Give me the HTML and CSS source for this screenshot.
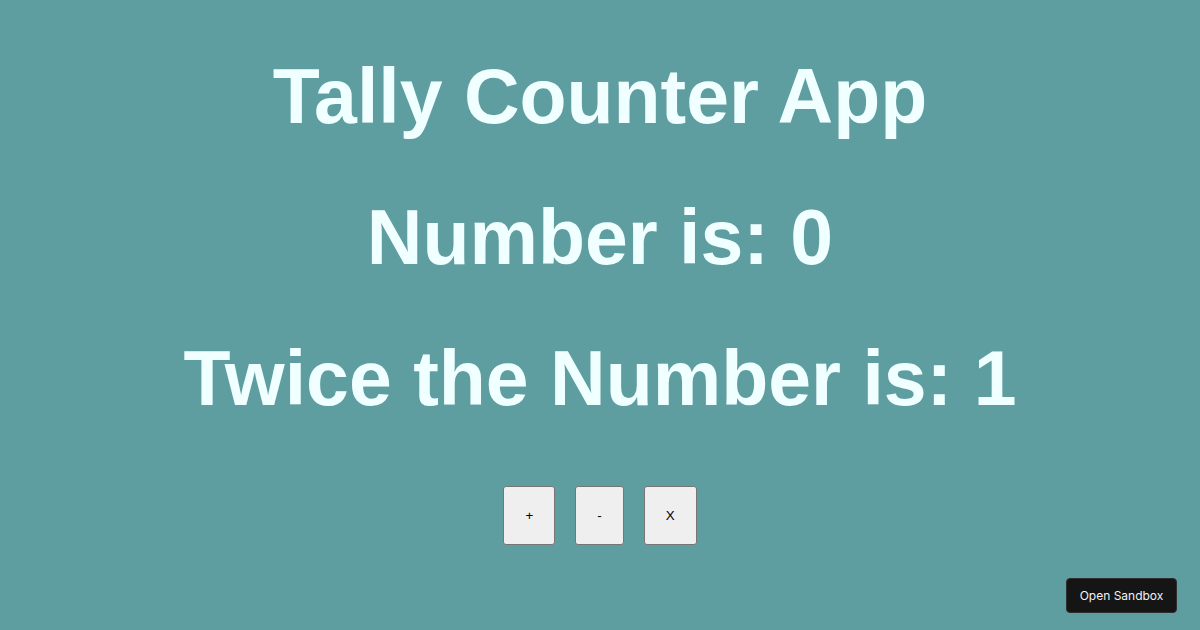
FILE: index.html
```html
<!DOCTYPE html>
<html>
<head>
<meta charset="utf-8">
<link rel="stylesheet" href="styles.css">
</head>
<body>
<div class="app">
  <h1 class="line">Tally Counter App</h1>
  <h1 class="line">Number is: 0</h1>
  <h1 class="line">Twice the Number is: 1</h1>
  <div class="controls">
    <button class="btn">+</button>
    <button class="btn">-</button>
    <button class="btn">X</button>
  </div>
</div>
<a class="sandbox">Open Sandbox</a>
</body>
</html>
```
FILE: styles.css
```css
html, body {
  background: #5f9ea0;
}
body {
  margin: 0;
  font-family: "Liberation Sans", Arial, sans-serif;
}
.app {
  display: flex;
  flex-direction: column;
  align-items: center;
  padding-top: 52px;
  gap: 52.5px;
}
.line {
  color: #f0ffff;
  font-size: 77px;
  font-weight: bold;
  line-height: 88.5px;
  margin: 0;
}
.controls {
  display: flex;
  justify-content: center;
  gap: 20px;
  margin-top: 11px;
}
.btn {
  font-family: "Liberation Sans", Arial, sans-serif;
  font-size: 13.33px;
  padding: 21px;
  background: #efefef;
  border: 1px solid #767676;
  border-radius: 3px;
  color: #000;
}
.sandbox {
  position: fixed;
  right: 23px;
  bottom: 17px;
  width: 111px;
  height: 35px;
  box-sizing: border-box;
  display: flex;
  align-items: center;
  justify-content: center;
  background: #151515;
  border: 1px solid #2e2e2e;
  border-radius: 4px;
  color: #f2f2f2;
  font-family: Inter, "Liberation Sans", sans-serif;
  font-size: 12px;
}
```
